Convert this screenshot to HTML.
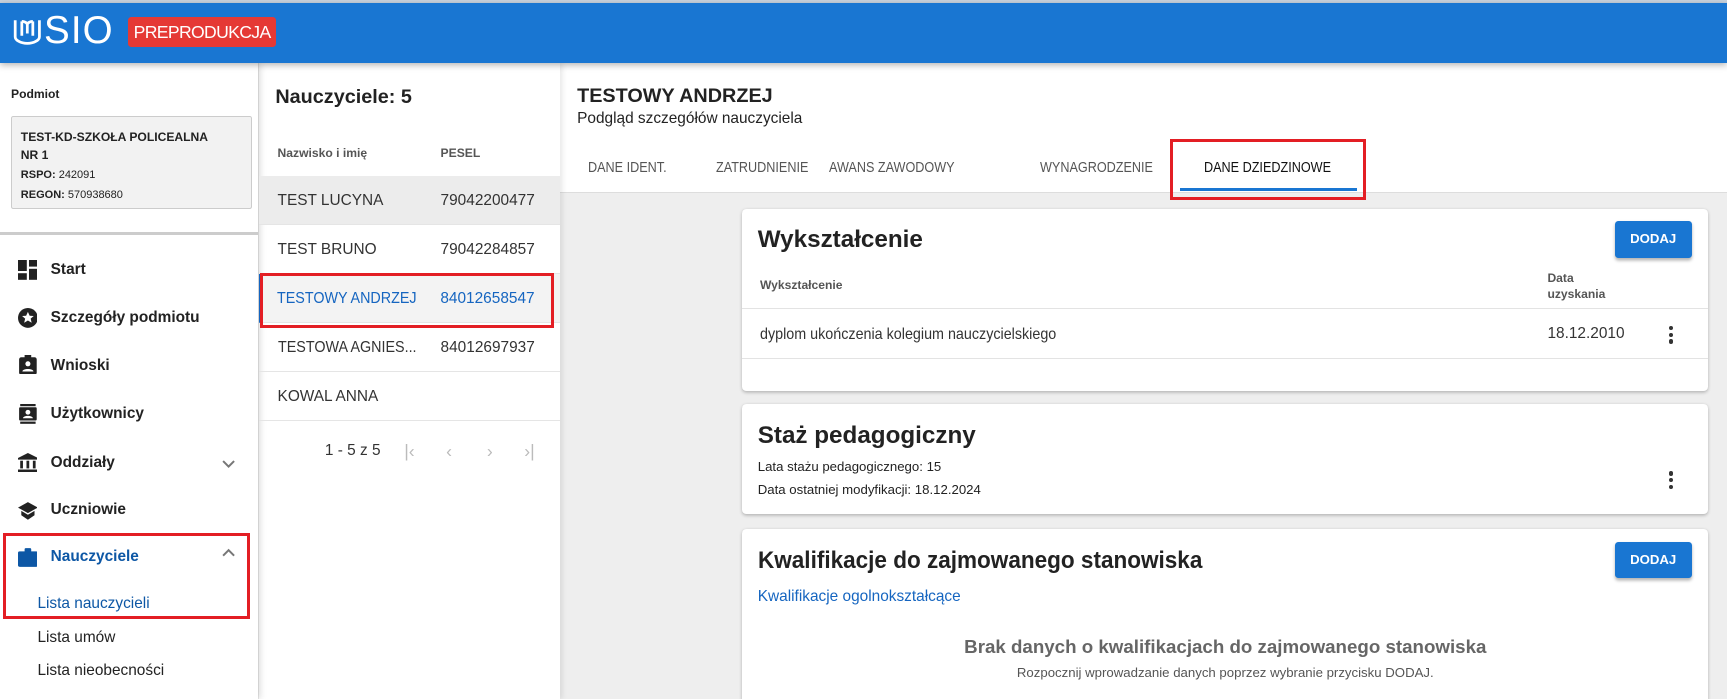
<!DOCTYPE html>
<html><head><meta charset="utf-8"><style>
*{box-sizing:border-box;margin:0;padding:0}
html,body{width:1727px;height:699px;overflow:hidden;background:#eee}
#w{zoom:1.1014;width:1568px;height:635px;position:relative;font-family:"Liberation Sans",sans-serif;color:#222;overflow:hidden}
.a{position:absolute;white-space:nowrap}
.hdr{left:0;top:3px;width:1568px;height:54px;background:#1976d2;box-shadow:0 2px 6px rgba(0,0,0,.3);z-index:5}
.top{left:0;top:0;width:1568px;height:3px;background:#c9d3de}
.side{left:0;top:57px;width:234px;height:578px;background:#fff;box-shadow:2px 0 6px rgba(0,0,0,.15);z-index:3}
.list{left:235px;top:57px;width:273px;height:578px;background:#fff;box-shadow:2px 0 5px rgba(0,0,0,.1);z-index:2}
.rh{left:508px;top:57px;width:1060px;height:118px;background:#fff;border-bottom:1px solid #ddd}
.nav{left:46px;font-size:14px;font-weight:bold;color:#222}
.ic{left:16px;width:18px;height:18px}
.row{left:235px;width:273px;height:44px;border-bottom:1px solid #e5e5e5;font-size:14px;color:#333}
.row span{position:absolute;top:14px}
.tab{top:145px;font-size:13.5px;color:#555;transform:scaleX(.85);transform-origin:left}
.card{left:674px;width:877px;background:#fff;border-radius:4px;box-shadow:0 1px 3px rgba(0,0,0,.25)}
.btn{background:#1976d2;color:#fff;font-size:12px;font-weight:bold;border-radius:3px;width:70px;height:33px;line-height:33px;text-align:center;box-shadow:0 2px 3px rgba(0,0,0,.3)}
.dots{width:4px}
.dots i{display:block;width:4px;height:4px;border-radius:2px;background:#333;margin-bottom:2px}
.red{border:3px solid #e31e24}
.pg{top:400px;font-size:16px;color:#bbb}
.sx{transform:scaleX(.93);transform-origin:left}
</style></head><body><div id="w">
<div class="a top"></div>
<div class="a hdr">
 <svg class="a" style="left:12px;top:12px" width="26" height="26" viewBox="0 0 26 26" fill="none" stroke="#fff" stroke-width="2.5"><path d="M2 3v15c0 3 5 6 11 6s11-3 11-6V3"/><path d="M8 4v13M18 4v13M8 4c2 0 5 1 5 3M18 4c-2 0-5 1-5 3v8"/></svg>
 <div class="a" style="left:40px;top:5px;font-size:35px;color:#fff;letter-spacing:1px">SIO</div>
 <div class="a" style="left:116px;top:12px;width:135px;height:28px;background:#e53935;border-radius:3px;color:#fff;font-size:16px;line-height:28px;text-align:center;letter-spacing:-.6px">PREPRODUKCJA</div>
</div>
<div class="a side">
 <div class="a" style="left:10px;top:22px;font-size:11px;font-weight:bold">Podmiot</div>
 <div class="a" style="left:10px;top:48px;width:219px;height:85px;background:#f2f2f2;border:1px solid #ccc;border-radius:2px;font-size:11px;padding:10px 8px;line-height:17px;white-space:normal">
  <b>TEST-KD-SZKOŁA POLICEALNA<br>NR 1</b><br><span style="font-size:10px;line-height:16px"><b>RSPO:</b> 242091<br><b>REGON:</b> 570938680</span></div>
 <div class="a" style="left:0;top:154px;width:234px;height:2px;background:#ccc"></div>
</div>
<div style="position:absolute;left:0;top:0;z-index:4">
 <svg class="a ic" style="top:236px" viewBox="0 0 18 18" fill="#222"><rect x="0" y="0" width="8" height="10"/><rect x="10" y="0" width="8" height="6"/><rect x="10" y="8" width="8" height="10"/><rect x="0" y="12" width="8" height="6"/></svg>
 <div class="a nav" style="top:237px">Start</div>
 <svg class="a ic" style="top:280px" viewBox="0 0 18 18"><circle cx="9" cy="9" r="9" fill="#222"/><path d="M9 3.5l1.6 3.5 3.7.3-2.8 2.4.9 3.7L9 11.4 5.6 13.4l.9-3.7-2.8-2.4 3.7-.3z" fill="#fff"/></svg>
 <div class="a nav" style="top:281px">Szczegóły podmiotu</div>
 <svg class="a ic" style="top:322px" viewBox="0 0 18 18"><rect x="1" y="2" width="16" height="16" rx="2" fill="#222"/><rect x="6" y="0" width="6" height="4" fill="#222"/><circle cx="9" cy="8" r="2.3" fill="#fff"/><path d="M4 15c0-3 10-3 10 0z" fill="#fff"/></svg>
 <div class="a nav" style="top:324px">Wnioski</div>
 <svg class="a ic" style="top:367px" viewBox="0 0 18 18"><rect x="2" y="0" width="14" height="2" fill="#222"/><rect x="2" y="16" width="14" height="2" fill="#222"/><rect x="1" y="3" width="16" height="12" rx="1" fill="#222"/><circle cx="9" cy="7.5" r="2.2" fill="#fff"/><path d="M4.5 13c0-3 9-3 9 0z" fill="#fff"/></svg>
 <div class="a nav" style="top:368px">Użytkownicy</div>
 <svg class="a ic" style="top:411px" viewBox="0 0 18 18" fill="#222"><path d="M9 0l9 4.5v1.5H0V4.5z"/><rect x="2" y="7" width="2.5" height="7"/><rect x="7.7" y="7" width="2.5" height="7"/><rect x="13.5" y="7" width="2.5" height="7"/><rect x="0" y="15" width="18" height="3"/></svg>
 <div class="a nav" style="top:412px">Oddziały</div>
 <svg class="a" style="left:202px;top:418px" width="12" height="8" viewBox="0 0 12 8"><path d="M1 1l5 5 5-5" stroke="#777" stroke-width="1.8" fill="none"/></svg>
 <svg class="a ic" style="top:455px" viewBox="0 0 18 18" fill="#222"><path d="M9 1L0 6l9 5 9-5z"/><path d="M3 9v4l6 4 6-4V9l-6 3.5z"/></svg>
 <div class="a nav" style="top:455px">Uczniowie</div>
 <svg class="a ic" style="top:497px" viewBox="0 0 18 18" fill="#0d57a5"><rect x="0" y="4" width="18" height="14" rx="1.5"/><rect x="6" y="1" width="6" height="4" rx="1"/></svg>
 <div class="a nav" style="top:498px;color:#0d57a5">Nauczyciele</div>
 <svg class="a" style="left:202px;top:498px" width="12" height="8" viewBox="0 0 12 8"><path d="M1 7l5-5 5 5" stroke="#777" stroke-width="1.8" fill="none"/></svg>
 <div class="a" style="left:34px;top:540px;font-size:14px;color:#0d57a5">Lista nauczycieli</div>
 <div class="a" style="left:34px;top:571px;font-size:14px">Lista umów</div>
 <div class="a" style="left:34px;top:601px;font-size:14px">Lista nieobecności</div>
 <div class="a red" style="left:3px;top:484px;width:224px;height:78px"></div>
</div>
<div class="a list">
 <div class="a" style="left:15px;top:21px;font-size:18px;font-weight:bold;color:#222">Nauczyciele: 5</div>
 <div class="a" style="left:17px;top:76px;font-size:11px;font-weight:bold;color:#555">Nazwisko i imię</div>
 <div class="a" style="left:165px;top:76px;font-size:11px;font-weight:bold;color:#555">PESEL</div>
</div>
<div style="position:absolute;left:0;top:0;z-index:3">
 <div class="a row" style="top:160px;background:#ececec"><span style="left:17px">TEST LUCYNA</span><span style="left:165px">79042200477</span></div>
 <div class="a row" style="top:205px"><span style="left:17px">TEST BRUNO</span><span style="left:165px">79042284857</span></div>
 <div class="a row" style="top:249px;background:#f3f3f3;color:#1565c0;border-left:2px solid #1565c0"><span style="left:15px" class="sx">TESTOWY ANDRZEJ</span><span style="left:163px">84012658547</span></div>
 <div class="a row" style="top:294px"><span style="left:17px" class="sx">TESTOWA AGNIES...</span><span style="left:165px">84012697937</span></div>
 <div class="a row" style="top:338px"><span style="left:17px">KOWAL ANNA</span></div>
 <div class="a" style="left:295px;top:401px;font-size:14px;color:#333">1 - 5 z 5</div>
 <div class="a pg" style="left:367px">|‹</div>
 <div class="a pg" style="left:405px">‹</div>
 <div class="a pg" style="left:442px">›</div>
 <div class="a pg" style="left:476px">›|</div>
 <div class="a red" style="left:236px;top:248px;width:267px;height:50px"></div>
</div>
<div class="a rh">
 <div class="a" style="left:16px;top:20px;font-size:18px;font-weight:bold">TESTOWY ANDRZEJ</div>
 <div class="a" style="left:16px;top:43px;font-size:14px">Podgląd szczegółów nauczyciela</div>
</div>
<div class="a tab" style="left:534px">DANE IDENT.</div>
<div class="a tab" style="left:650px">ZATRUDNIENIE</div>
<div class="a tab" style="left:753px">AWANS ZAWODOWY</div>
<div class="a tab" style="left:944px">WYNAGRODZENIE</div>
<div class="a tab" style="left:1093px;color:#111">DANE DZIEDZINOWE</div>
<div class="a" style="left:1071px;top:171px;width:161px;height:2px;background:#1976d2"></div>
<div class="a red" style="left:1062px;top:126px;width:178px;height:56px"></div>

<div class="a card" style="top:190px;height:165px">
 <div class="a" style="left:14px;top:15px;font-size:22px;font-weight:bold">Wykształcenie</div>
 <div class="a btn" style="left:792px;top:11px">DODAJ</div>
 <div class="a" style="left:16px;top:62px;font-size:11px;font-weight:bold;color:#555">Wykształcenie</div>
 <div class="a" style="left:731px;top:55px;font-size:11px;font-weight:bold;color:#555;line-height:15px">Data<br>uzyskania</div>
 <div class="a" style="left:0;top:90px;width:877px;height:1px;background:#e3e3e3"></div>
 <div class="a sx" style="left:16px;top:106px;font-size:14px;color:#333">dyplom ukończenia kolegium nauczycielskiego</div>
 <div class="a" style="left:731px;top:105px;font-size:14px;color:#333">18.12.2010</div>
 <div class="a dots" style="left:841px;top:106px"><i></i><i></i><i></i></div>
 <div class="a" style="left:0;top:135px;width:877px;height:1px;background:#e3e3e3"></div>
</div>
<div class="a card" style="top:367px;height:100px">
 <div class="a" style="left:14px;top:16px;font-size:22px;font-weight:bold">Staż pedagogiczny</div>
 <div class="a" style="left:14px;top:50px;font-size:12px">Lata stażu pedagogicznego: 15</div>
 <div class="a" style="left:14px;top:71px;font-size:12px">Data ostatniej modyfikacji: 18.12.2024</div>
 <div class="a dots" style="left:841px;top:61px"><i></i><i></i><i></i></div>
</div>
<div class="a card" style="top:480px;height:170px">
 <div class="a sx" style="left:14px;top:17px;font-size:22px;font-weight:bold">Kwalifikacje do zajmowanego stanowiska</div>
 <div class="a btn" style="left:792px;top:12px">DODAJ</div>
 <div class="a" style="left:14px;top:54px;font-size:14px;color:#1565c0">Kwalifikacje ogolnokształcące</div>
 <div class="a" style="left:0;top:97px;width:877px;text-align:center;font-size:17px;font-weight:bold;color:#666">Brak danych o kwalifikacjach do zajmowanego stanowiska</div>
 <div class="a" style="left:0;top:124px;width:877px;text-align:center;font-size:12px;color:#555">Rozpocznij wprowadzanie danych poprzez wybranie przycisku DODAJ.</div>
</div>
</div></body></html>
